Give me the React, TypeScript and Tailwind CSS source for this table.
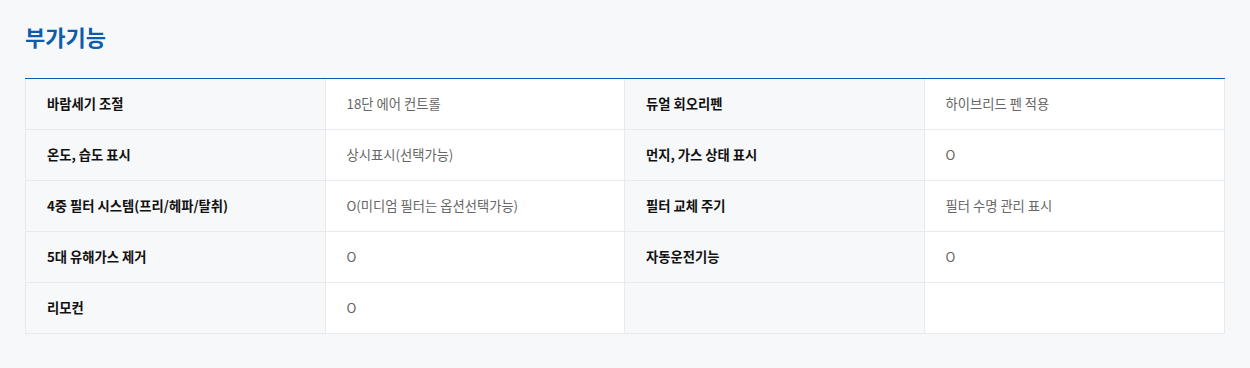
import React from 'react';

const rows: [string, string, string, string][] = [
  ['바람세기 조절', '18단 에어 컨트롤', '듀얼 회오리펜', '하이브리드 펜 적용'],
  ['온도, 습도 표시', '상시표시(선택가능)', '먼지, 가스 상태 표시', 'O'],
  ['4중 필터 시스템(프리/헤파/탈취)', 'O(미디엄 필터는 옵션선택가능)', '필터 교체 주기', '필터 수명 관리 표시'],
  ['5대 유해가스 제거', 'O', '자동운전기능', 'O'],
  ['리모컨', 'O', '', ''],
];

export default function App() {
  return (
    <div
      className="min-h-screen bg-[#f7f8fa] px-[25px] pt-[20px]"
      style={{ fontFamily: '"Noto Sans CJK KR", "Noto Sans", sans-serif' }}
    >
      <h2 className="text-[22px] font-bold text-[#0b5cad] leading-[32px]">부가기능</h2>
      <div className="mt-[26px] border-t border-t-[#0d5bb5]">
        {rows.map((r, i) => (
          <div key={i} className="grid grid-cols-4 border-x border-b border-[#e8eaed]">
            <div className="h-[50px] flex items-center px-[21px] text-[13.3px] font-bold text-[#111] bg-[#f7f8fa] border-r border-[#e8eaed]">
              {r[0]}
            </div>
            <div className="h-[50px] flex items-center px-[21px] text-[13.3px] text-[#666] bg-white border-r border-[#e8eaed]">
              {r[1]}
            </div>
            <div className="h-[50px] flex items-center px-[21px] text-[13.3px] font-bold text-[#111] bg-[#f7f8fa] border-r border-[#e8eaed]">
              {r[2]}
            </div>
            <div className="h-[50px] flex items-center px-[21px] text-[13.3px] text-[#666] bg-white">
              {r[3]}
            </div>
          </div>
        ))}
      </div>
    </div>
  );
}
